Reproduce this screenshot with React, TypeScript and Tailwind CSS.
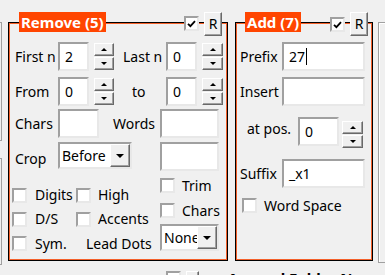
import React from "react";

const sunken =
  "bg-white border-2 border-t-[#a0a0a0] border-l-[#a0a0a0] border-r-[#e8e8e8] border-b-[#e8e8e8]";
const raised =
  "bg-[#f0f0f0] border border-t-white border-l-white border-r-[#696969] border-b-[#696969] shadow-[inset_-1px_-1px_0_#a0a0a0]";

function TextBox({ w, value, caret }: { w: string; value?: string; caret?: boolean }) {
  return (
    <div className={`${w} h-[29px] shrink-0 ${sunken} flex items-center pl-[5px] leading-none`}>
      {value}
      {caret && <span className="ml-px w-px h-[17px] bg-black" />}
    </div>
  );
}

function Spinner({ w, className = "" }: { w: string; className?: string }) {
  return (
    <div className={`${w} shrink-0 flex flex-col gap-px ${className}`}>
      <div className={`h-[13px] ${raised} flex items-center justify-center`}>
        <div className="w-0 h-0 border-x-[3px] border-x-transparent border-b-[3px] border-b-black" />
      </div>
      <div className={`h-[13px] ${raised} flex items-center justify-center`}>
        <div className="w-0 h-0 border-x-[3px] border-x-transparent border-t-[3px] border-t-black" />
      </div>
    </div>
  );
}

function Combo({ w, value }: { w: string; value: string }) {
  return (
    <div className={`${w} h-[27px] shrink-0 ${sunken} flex`}>
      <div className="flex-1 overflow-hidden whitespace-nowrap pl-[2px] flex items-center leading-none">
        {value}
      </div>
      <div className={`w-[20px] ${raised} flex items-center justify-center`}>
        <div className="w-0 h-0 border-x-[4px] border-x-transparent border-t-[4px] border-t-black" />
      </div>
    </div>
  );
}

function Check({ checked }: { checked?: boolean }) {
  return (
    <div className={`w-[15px] h-[15px] shrink-0 ${sunken} flex items-center justify-center`}>
      {checked && (
        <svg width="9" height="8" viewBox="0 0 9 8">
          <path d="M1 3.8 L3.4 6.2 L8 1.2" fill="none" stroke="black" strokeWidth="1.8" />
        </svg>
      )}
    </div>
  );
}

function RButton({ className = "" }: { className?: string }) {
  return (
    <div className={`absolute w-[18px] h-[24px] ${raised} flex items-center justify-center leading-none ${className}`}>
      R
    </div>
  );
}

function Label({ w, children, className = "" }: { w: string; children: React.ReactNode; className?: string }) {
  return <div className={`${w} shrink-0 whitespace-nowrap leading-none ${className}`}>{children}</div>;
}

function CheckItem({ label, gap = "ml-[8px]", w }: { label: string; gap?: string; w?: string }) {
  return (
    <div className={`flex items-center ${w ?? ""}`}>
      <Check />
      <span className={`${gap} leading-none whitespace-nowrap`}>{label}</span>
    </div>
  );
}

function Title({ text, className }: { text: string; className: string }) {
  return (
    <div
      className={`absolute h-[20px] px-[2px] bg-[#ff4500] text-white text-[15px] font-bold flex items-center leading-none whitespace-nowrap ${className}`}
    >
      {text}
    </div>
  );
}

function RemoveGroup() {
  return (
    <div className="relative ml-[6px] w-[220px] h-[239px] border border-black">
      <div className="h-full border border-[#f4602a] flex flex-col">
        {/* first / last */}
        <div className="mt-[18px] h-[29px] flex items-center pl-[5px]">
          <Label w="w-[43px]">First n</Label>
          <TextBox w="w-[31px]" value="2" />
          <Spinner w="w-[20px]" className="ml-[5px]" />
          <Label w="w-[43px]" className="ml-[9px]">Last n</Label>
          <TextBox w="w-[31px]" value="0" />
          <Spinner w="w-[21px]" className="ml-[5px]" />
        </div>
        {/* from / to */}
        <div className="mt-[6px] h-[29px] flex items-center pl-[5px]">
          <Label w="w-[43px]">From</Label>
          <TextBox w="w-[31px]" value="0" />
          <Spinner w="w-[20px]" className="ml-[5px]" />
          <Label w="w-[34px]" className="ml-[18px]">to</Label>
          <TextBox w="w-[31px]" value="0" />
          <Spinner w="w-[21px]" className="ml-[5px]" />
        </div>
        {/* chars / words */}
        <div className="mt-[3px] h-[29px] flex items-center pl-[5px]">
          <Label w="w-[43px]">Chars</Label>
          <TextBox w="w-[41px]" />
          <Label w="w-[47px]" className="ml-[14px]">Words</Label>
          <TextBox w="w-[59px]" />
        </div>
        {/* crop */}
        <div className="mt-[4px] h-[29px] flex items-start pl-[5px]">
          <Label w="w-[43px]" className="h-[29px] pt-[5px] flex items-center">Crop</Label>
          <Combo w="w-[74px]" value="Before" />
          <div className="ml-[28px]">
            <TextBox w="w-[59px]" />
          </div>
        </div>
        {/* check boxes */}
        <div className="flex">
          <div className="ml-[2px] mt-[12px] w-[148px] flex flex-col">
            <div className="h-[24px] flex items-center">
              <CheckItem label="Digits" w="w-[64px]" />
              <CheckItem label="High" gap="ml-[7px]" />
            </div>
            <div className="h-[24px] flex items-center">
              <CheckItem label="D/S" w="w-[64px]" />
              <CheckItem label="Accents" gap="ml-[7px]" />
            </div>
            <div className="h-[25px] flex items-center">
              <CheckItem label="Sym." w="w-[64px]" />
              <span className="ml-[10px] leading-none whitespace-nowrap">Lead Dots</span>
            </div>
          </div>
          <div className="mt-[7px] flex flex-col">
            <CheckItem label="Trim" gap="ml-[7px]" />
            <div className="mt-[10px]">
              <CheckItem label="Chars" gap="ml-[7px]" />
            </div>
            <div className="mt-[6px]">
              <Combo w="w-[59px]" value="None" />
            </div>
          </div>
        </div>
      </div>
      <Title text="Remove (5)" className="left-[10px] -top-[11px]" />
      <div className="absolute left-[175px] -top-[7px]">
        <Check checked />
      </div>
      <RButton className="left-[195px] -top-[11px]" />
    </div>
  );
}

function AddGroup() {
  return (
    <div className="relative ml-[7px] w-[138px] h-[239px] border border-black">
      <div className="h-full border border-[#f4602a] flex flex-col">
        <div className="mt-[18px] h-[29px] flex items-center pl-[3px]">
          <Label w="w-[42px]">Prefix</Label>
          <TextBox w="w-[83px]" value="27" caret />
        </div>
        <div className="mt-[6px] h-[29px] flex items-center pl-[3px]">
          <Label w="w-[42px]">Insert</Label>
          <TextBox w="w-[83px]" />
        </div>
        <div className="mt-[11px] h-[30px] flex items-start pl-[10px]">
          <Label w="w-[51px]" className="h-[24px] flex items-center">at pos.</Label>
          <TextBox w="w-[41px]" value="0" />
          <Spinner w="w-[21px]" className="ml-[3px] mt-[4px]" />
        </div>
        <div className="mt-[12px] h-[29px] flex items-center pl-[3px]">
          <Label w="w-[42px]">Suffix</Label>
          <TextBox w="w-[83px]" value="_x1" />
        </div>
        <div className="mt-[10px] pl-[5px]">
          <CheckItem label="Word Space" gap="ml-[7px]" />
        </div>
      </div>
      <Title text="Add (7)" className="left-[9px] -top-[11px]" />
      <div className="absolute left-[94px] -top-[6px]">
        <Check checked />
      </div>
      <RButton className="left-[114px] -top-[11px]" />
    </div>
  );
}

export default function App() {
  return (
    <div className="w-[385px] h-[275px] overflow-hidden bg-[#f0f0f0] text-black text-[14px] font-['Noto_Sans',sans-serif] pt-[22px]">
      <div className="h-[239px] flex items-start">
        <div className="w-[2px] shrink-0 flex flex-col">
          <div className="h-[119px] border-y border-r border-[#a0a0a0]" />
          <div className="mt-[17px] h-[107px] border-y border-r border-[#a0a0a0]" />
        </div>
        <RemoveGroup />
        <AddGroup />
        <div className="ml-[5px] flex-1 h-[241px] border-l border-y border-[#a0a0a0] shadow-[inset_1px_1px_0_white]" />
      </div>
      <div className="mt-[10px] flex items-start">
        <div className="ml-[166px]">
          <Check />
        </div>
        <div className={`ml-[5px] w-[17px] h-[20px] ${raised}`} />
        <div className="ml-[29px] font-bold text-[15px] leading-none whitespace-nowrap">Append Folder Name</div>
      </div>
    </div>
  );
}
